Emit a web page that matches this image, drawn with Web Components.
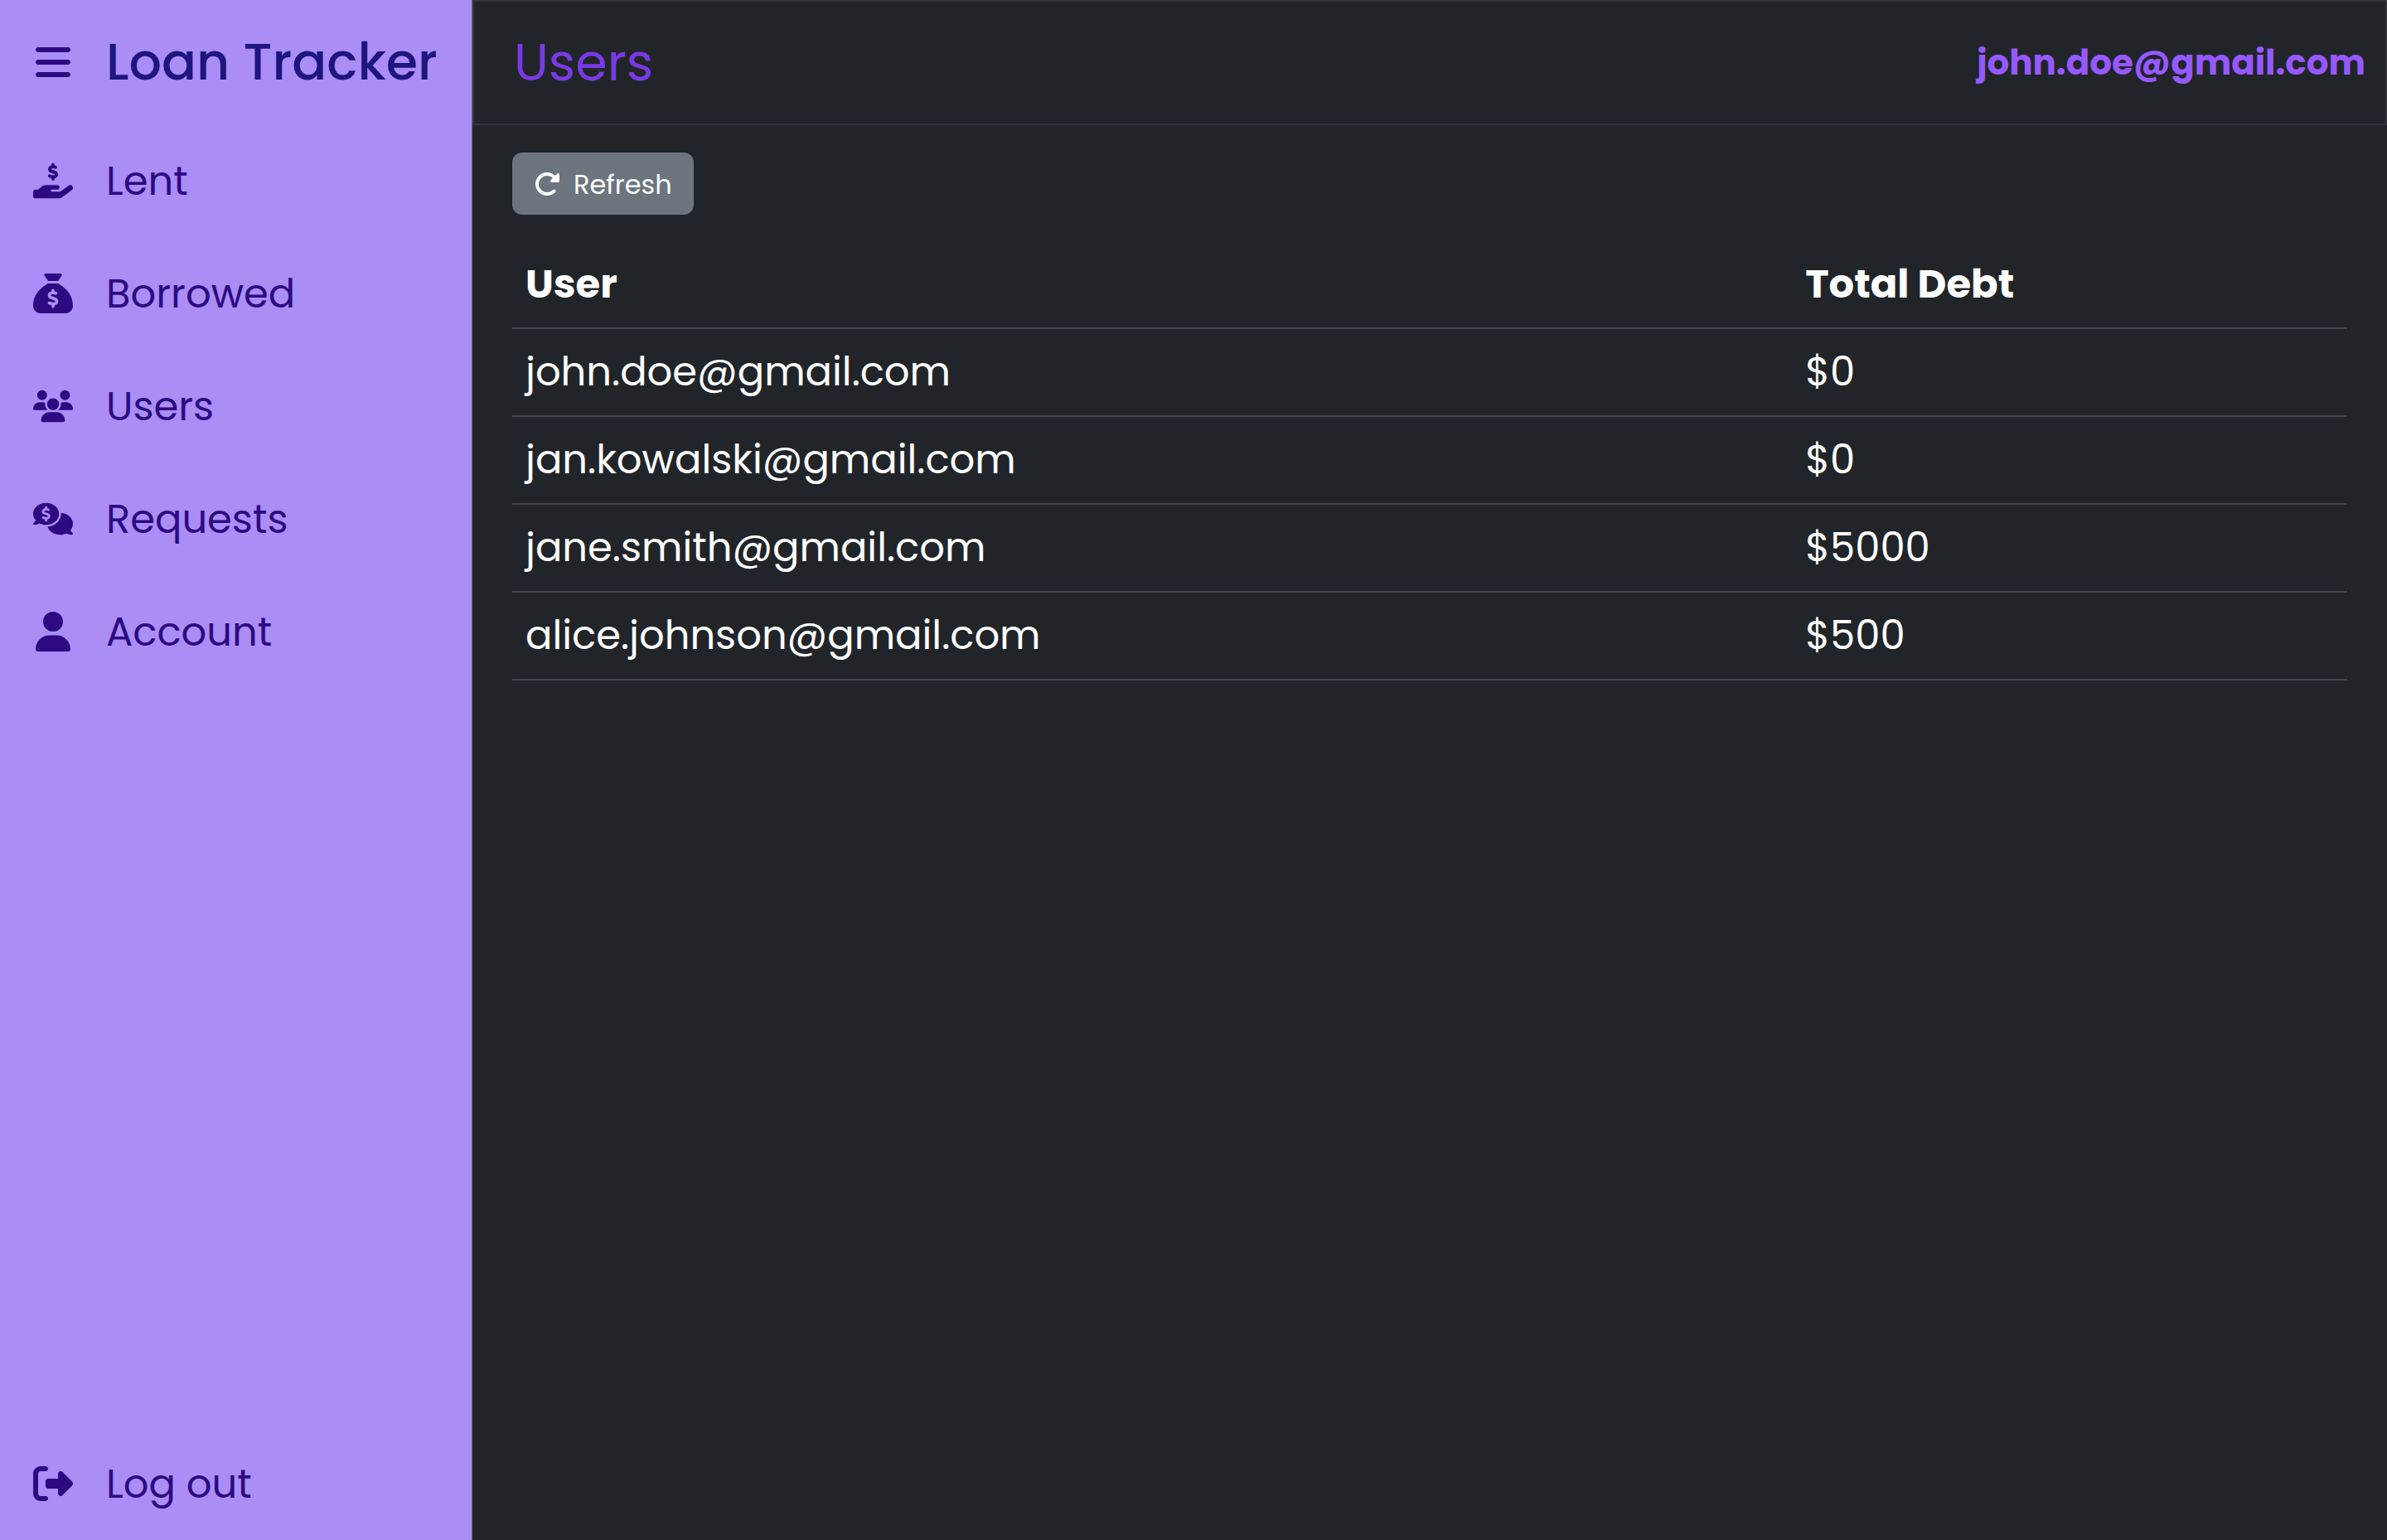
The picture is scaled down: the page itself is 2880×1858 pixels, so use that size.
<!DOCTYPE html>
<html lang="en">
<head>
<meta charset="utf-8">
<meta name="viewport" content="width=device-width, initial-scale=1">
<title>Loan Tracker</title>
<style>
  body {
    margin: 0;
    background: #212529;
    color: #fff;
    font-family: Poppins, Inter, sans-serif;
    font-size: 48px;
    line-height: 72px;
  }
</style>
</head>
<body>
<loan-app></loan-app>

<script>
const ICONS = {
  bars: { w: 448, d: "M0 96C0 78.3 14.3 64 32 64H416c17.7 0 32 14.3 32 32s-14.3 32-32 32H32C14.3 128 0 113.7 0 96zM0 256c0-17.7 14.3-32 32-32H416c17.7 0 32 14.3 32 32s-14.3 32-32 32H32c-17.7 0-32-14.3-32-32zM448 416c0 17.7-14.3 32-32 32H32c-17.7 0-32-14.3-32-32s14.3-32 32-32H416c17.7 0 32 14.3 32 32z" },
  lent: { w: 576, d: "M312 24V34.5c6.4 1.2 12.6 2.7 18.2 4.2c12.8 3.4 20.4 16.6 17 29.4s-16.6 20.4-29.4 17c-10.9-2.9-21.1-4.9-30.2-5c-7.3-.1-14.7 1.7-19.4 4.4c-2.1 1.3-3.1 2.4-3.5 3c-.3 .5-.7 1.2-.7 2.8c0 .3 0 .5 0 .6c.2 .2 .9 1.2 3.3 2.6c5.8 3.5 14.4 6.2 27.4 10.1l.9 .3c11.1 3.3 25.9 7.8 37.9 15.3c13.7 8.6 26.1 22.9 26.4 44.9c.3 22.5-11.4 38.9-26.7 48.5c-6.7 4.1-13.9 7-21.3 8.8V232c0 13.3-10.7 24-24 24s-24-10.7-24-24V220.6c-9.5-2.3-18.2-5.3-25.6-7.8c-2.1-.7-4.1-1.4-6-2c-12.6-4.2-19.4-17.8-15.2-30.4s17.8-19.4 30.4-15.2c2.6 .9 5 1.7 7.3 2.5c13.6 4.6 23.4 7.9 33.9 8.3c8 .3 15.1-1.6 19.2-4.1c1.9-1.2 2.8-2.2 3.2-2.9c.4-.6 .9-1.8 .8-4.1l0-.2c0-1 0-2.1-4-4.6c-5.7-3.6-14.3-6.4-27.1-10.3l-1.9-.6c-10.8-3.2-25-7.5-36.4-14.4c-13.5-8.1-26.5-22-26.6-44.1c-.1-22.9 12.9-38.6 27.7-47.4c6.4-3.8 13.3-6.4 20.2-8.2V24c0-13.3 10.7-24 24-24s24 10.7 24 24zM568.2 336.3c13.1 17.8 9.3 42.8-8.5 55.9L433.1 485.5c-23.4 17.2-51.6 26.5-80.7 26.5H192 32c-17.7 0-32-14.3-32-32V416c0-17.7 14.3-32 32-32H68.8l44.9-36c22.7-18.2 50.9-28 80-28H272h16 64c17.7 0 32 14.3 32 32s-14.3 32-32 32H288 272c-8.8 0-16 7.2-16 16s7.2 16 16 16H392.6l119.7-88.2c17.8-13.1 42.8-9.3 55.9 8.5z" },
  borrowed: { w: 512, d: "M320 96H192L144.6 24.9C137.5 14.2 145.1 0 157.9 0H354.1c12.8 0 20.4 14.2 13.3 24.9L320 96zM192 128H320c3.8 2.5 8.1 5.3 13 8.4C389.7 172.7 512 250.9 512 416c0 53-43 96-96 96H96c-53 0-96-43-96-96C0 250.9 122.3 172.7 179 136.4c4.8-3.1 9.2-5.9 13-8.4zm84 88c0-11-9-20-20-20s-20 9-20 20v14c-7.6 1.7-15.2 4.4-22.2 8.5c-13.9 8.3-25.9 22.8-25.8 43.9c.1 20.3 12 33.1 24.7 40.7c11 6.6 24.7 10.8 35.6 14l1.7 .5c12.6 3.8 21.8 6.8 28 10.7c5.1 3.2 5.8 5.4 5.9 8.2c.1 5-1.8 8-5.9 10.5c-5 3.1-12.9 5-21.4 4.7c-11.1-.4-21.5-3.9-35.1-8.5c-2.3-.8-4.7-1.6-7.2-2.4c-10.5-3.5-21.8 2.2-25.3 12.6s2.2 21.8 12.6 25.3c1.9 .6 4 1.3 6.1 2.1c8.3 2.9 17.9 6.2 28.2 8.4V424c0 11 9 20 20 20s20-9 20-20V410.2c8-1.7 16-4.5 23.2-9c14.3-8.9 25.1-24.1 24.8-45c-.3-20.3-11.7-33.4-24.6-41.6c-11.5-7.2-25.9-11.6-37.1-15l-.7-.2c-12.8-3.9-21.9-6.7-28.3-10.5c-5.2-3.1-5.3-4.9-5.3-6.7c0-3.7 1.4-6.5 6.2-9.3c5.4-3.2 13.6-5.1 21.5-5c9.6 .1 20.2 2.2 31.2 5.2c10.7 2.8 21.6-3.5 24.5-14.2s-3.5-21.6-14.2-24.5c-6.5-1.7-13.7-3.4-21.1-4.7V216z" },
  users: { w: 640, d: "M144 0a80 80 0 1 1 0 160A80 80 0 1 1 144 0zM512 0a80 80 0 1 1 0 160A80 80 0 1 1 512 0zM0 298.7C0 239.8 47.8 192 106.7 192h42.7c15.9 0 31 3.5 44.6 9.7c-1.3 7.2-1.9 14.7-1.9 22.3c0 38.2 16.8 72.5 43.3 96H21.3C9.6 320 0 310.4 0 298.7zM405.3 320h-.7c26.6-23.5 43.3-57.8 43.3-96c0-7.6-.7-15-1.9-22.3c13.6-6.3 28.7-9.7 44.6-9.7h42.7C592.2 192 640 239.8 640 298.7c0 11.8-9.6 21.3-21.3 21.3H405.3zM224 224a96 96 0 1 1 192 0 96 96 0 1 1 -192 0zM128 485.3C128 411.7 187.7 352 261.3 352H378.7C452.3 352 512 411.7 512 485.3c0 14.7-11.9 26.7-26.7 26.7H154.7c-14.7 0-26.7-11.9-26.7-26.7z" },
  requests: { w: 640, d: "M208 352c114.9 0 208-78.8 208-176S322.9 0 208 0S0 78.8 0 176c0 38.6 14.7 74.3 39.6 103.4c-3.5 9.4-8.7 17.7-14.2 24.7c-4.8 6.2-9.7 11-13.3 14.3c-1.8 1.6-3.3 2.9-4.3 3.7c-.5 .4-.9 .7-1.1 .8l-.2 .2C1 327.2-1.4 334.4 .8 340.9S9.1 352 16 352c21.8 0 43.8-5.6 62.1-12.5c9.2-3.5 17.8-7.4 25.3-11.4C134.1 343.3 169.8 352 208 352zM228 72c0-11-9-20-20-20s-20 9-20 20v14c-7.6 1.7-15.2 4.4-22.2 8.5c-13.9 8.3-25.9 22.8-25.8 43.9c.1 20.3 12 33.1 24.7 40.7c11 6.6 24.7 10.8 35.6 14l1.7 .5c12.6 3.8 21.8 6.8 28 10.7c5.1 3.2 5.8 5.4 5.9 8.2c.1 5-1.8 8-5.9 10.5c-5 3.1-12.9 5-21.4 4.7c-11.1-.4-21.5-3.9-35.1-8.5c-2.3-.8-4.7-1.6-7.2-2.4c-10.5-3.5-21.8 2.2-25.3 12.6s2.2 21.8 12.6 25.3c1.9 .6 4 1.3 6.1 2.1c8.3 2.9 17.9 6.2 28.2 8.4V280c0 11 9 20 20 20s20-9 20-20V266.2c8-1.7 16-4.5 23.2-9c14.3-8.9 25.1-24.1 24.8-45c-.3-20.3-11.7-33.4-24.6-41.6c-11.5-7.2-25.9-11.6-37.1-15l-.7-.2c-12.8-3.9-21.9-6.7-28.3-10.5c-5.2-3.1-5.3-4.9-5.3-6.7c0-3.7 1.4-6.5 6.2-9.3c5.4-3.2 13.6-5.1 21.5-5c9.6 .1 20.2 2.2 31.2 5.2c10.7 2.8 21.6-3.5 24.5-14.2s-3.5-21.6-14.2-24.5c-6.5-1.7-13.7-3.4-21.1-4.7V72zM448 176c0 112.3-99.1 196.9-216.5 207C255.8 457.4 336.4 512 432 512c38.2 0 73.9-8.7 104.7-23.9c7.5 4 16 7.9 25.2 11.4c18.3 6.9 40.3 12.5 62.1 12.5c6.9 0 13.1-4.5 15.2-11.1c2.1-6.6-.2-13.8-5.8-17.9l-.2-.2c-.2-.2-.6-.4-1.1-.8c-1-.8-2.5-2-4.3-3.7c-3.6-3.3-8.5-8.1-13.3-14.3c-5.5-7-10.7-15.4-14.2-24.7c24.9-29 39.6-64.7 39.6-103.4c0-92.8-84.9-168.9-192.6-175.5c.4 5.1 .6 10.3 .6 15.5z" },
  account: { w: 448, d: "M224 256A128 128 0 1 0 224 0a128 128 0 1 0 0 256zm-45.7 48C79.8 304 0 383.8 0 482.3C0 498.7 13.3 512 29.7 512H418.3c16.4 0 29.7-13.3 29.7-29.7C448 383.8 368.2 304 269.7 304H178.3z" },
  logout: { w: 512, d: "M377.9 105.9L500.7 228.7c7.2 7.2 11.3 17.1 11.3 27.3s-4.1 20.1-11.3 27.3L377.9 406.1c-6.4 6.4-15 9.9-24 9.9c-18.7 0-33.9-15.2-33.9-33.9l0-62.1-128 0c-17.7 0-32-14.3-32-32l0-64c0-17.7 14.3-32 32-32l128 0 0-62.1c0-18.7 15.2-33.9 33.9-33.9c9 0 17.6 3.6 24 9.9zM160 96L96 96c-17.7 0-32 14.3-32 32l0 256c0 17.7 14.3 32 32 32l64 0c17.7 0 32 14.3 32 32s-14.3 32-32 32l-64 0c-53 0-96-43-96-96L0 128C0 75 43 32 96 32l64 0c17.7 0 32 14.3 32 32s-14.3 32-32 32z" },
  refresh: { w: 512, d: "M463.5 224H472c13.3 0 24-10.7 24-24V72c0-9.7-5.8-18.5-14.8-22.2s-19.3-1.7-26.2 5.2L413.4 96.6c-87.6-86.5-228.7-86.2-315.8 1c-87.5 87.5-87.5 229.3 0 316.8s229.3 87.5 316.8 0c12.5-12.5 12.5-32.8 0-45.3s-32.8-12.5-45.3 0c-62.5 62.5-163.8 62.5-226.3 0s-62.5-163.8 0-226.3c62.2-62.2 162.7-62.5 225.3-1L327 183c-6.9 6.9-8.9 17.2-5.2 26.2s12.5 14.8 22.2 14.8H463.5z" }
};

const USERS = [
  ["john.doe@gmail.com", 0],
  ["jan.kowalski@gmail.com", 0],
  ["jane.smith@gmail.com", 5000],
  ["alice.johnson@gmail.com", 500]
];

class Base extends HTMLElement {
  connectedCallback() {
    if (!this.shadowRoot) this.attachShadow({ mode: "open" }).innerHTML = this.render();
  }
}

customElements.define("app-icon", class extends Base {
  render() {
    const icon = ICONS[this.getAttribute("name")];
    return `
      <style>
        :host { display: block; flex: none; width: var(--icon-size, 48px); height: var(--icon-size, 48px); }
        svg { display: block; width: 100%; height: 100%; fill: currentColor; }
      </style>
      <svg viewBox="0 0 ${icon.w} 512" aria-hidden="true"><path fill-rule="evenodd" d="${icon.d}"/></svg>`;
  }
});

customElements.define("nav-item", class extends Base {
  render() {
    return `
      <style>
        :host { display: block; }
        a {
          display: flex; align-items: center; gap: 40px;
          height: 136px; padding: 0 40px;
          color: #2d0a82; text-decoration: none;
        }
        .label { padding-top: 2px; }
      </style>
      <a href="${this.getAttribute("href")}">
        <app-icon name="${this.getAttribute("icon")}"></app-icon>
        <span class="label"><slot></slot></span>
      </a>`;
  }
});

customElements.define("app-sidebar", class extends Base {
  render() {
    return `
      <style>
        :host { display: flex; flex-direction: column; background: #aa8df5; border-right: 1px solid #6c5fa0; }
        .brand { display: flex; align-items: center; gap: 40px; height: 150px; padding: 0 40px; }
        button { all: unset; cursor: pointer; color: #2d0a82; }
        .name { color: #1e157f; font-size: var(--title-size); font-weight: 500; white-space: nowrap; }
        nav { display: flex; flex-direction: column; flex: 1; }
        nav-item:last-child { margin-top: auto; }
      </style>
      <div class="brand">
        <button type="button" aria-label="Toggle menu"><app-icon name="bars"></app-icon></button>
        <span class="name">Loan Tracker</span>
      </div>
      <nav>
        <nav-item href="#lent" icon="lent">Lent</nav-item>
        <nav-item href="#borrowed" icon="borrowed">Borrowed</nav-item>
        <nav-item href="#users" icon="users">Users</nav-item>
        <nav-item href="#requests" icon="requests">Requests</nav-item>
        <nav-item href="#account" icon="account">Account</nav-item>
        <nav-item href="#logout" icon="logout">Log out</nav-item>
      </nav>`;
  }
});

customElements.define("page-header", class extends Base {
  render() {
    return `
      <style>
        :host {
          display: flex; align-items: center; justify-content: space-between;
          box-sizing: border-box; height: 151px; padding: 0 24px 0 48px;
          border: 2px solid #32363b;
        }
        h1 { margin: 0; color: #7a39e6; font-size: var(--title-size); font-weight: 400; }
        .account { color: #9559ff; font-size: 42px; font-weight: 700; }
      </style>
      <h1><slot></slot></h1>
      <span class="account"><slot name="account"></slot></span>`;
  }
});

customElements.define("refresh-button", class extends Base {
  render() {
    return `
      <style>
        :host { display: block; }
        button {
          display: flex; align-items: center; gap: 16px;
          height: 75px; padding: 0 26px; border: 0; border-radius: 12px;
          background: #6c757d; color: #fff; cursor: pointer;
          font: inherit; font-size: 32px; line-height: 48px;
          --icon-size: 32px;
        }
        .label { padding-top: 2px; }
      </style>
      <button type="button"><app-icon name="refresh"></app-icon><span class="label"><slot></slot></span></button>`;
  }
});

customElements.define("users-table", class extends Base {
  render() {
    const rows = USERS.map(([email, debt]) => `<tr><td>${email}</td><td>$${debt}</td></tr>`).join("");
    return `
      <style>
        :host { display: block; }
        table { width: 100%; table-layout: fixed; border-collapse: separate; border-spacing: 0; }
        th, td { padding: 16px; text-align: left; border-bottom: 2px solid #41474c; }
        th { font-weight: 700; }
        th:first-child { width: 69.75%; box-sizing: border-box; }
      </style>
      <table>
        <thead><tr><th scope="col">User</th><th scope="col">Total Debt</th></tr></thead>
        <tbody>${rows}</tbody>
      </table>`;
  }
});

customElements.define("loan-app", class extends Base {
  render() {
    return `
      <style>
        :host {
          display: grid; grid-template-columns: 570px minmax(0, 1fr);
          min-height: 100vh; --title-size: 62px;
        }
        main { display: flex; flex-direction: column; align-items: flex-start; gap: 32px; padding: 33px 48px; }
        users-table { align-self: stretch; }
      </style>
      <app-sidebar></app-sidebar>
      <div>
        <page-header>Users<span slot="account">john.doe@gmail.com</span></page-header>
        <main>
          <refresh-button>Refresh</refresh-button>
          <users-table></users-table>
        </main>
      </div>`;
  }
});
</script>
</body>
</html>
